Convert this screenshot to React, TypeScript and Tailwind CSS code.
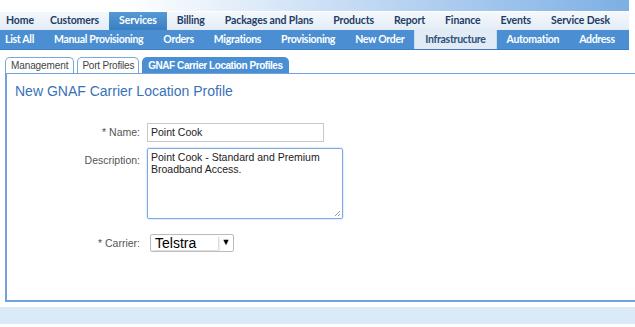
const top = ["Home", "Customers", "Services", "Billing", "Packages and Plans", "Products", "Report", "Finance", "Events", "Service Desk"];
const sub = ["List All", "Manual Provisioning", "Orders", "Migrations", "Provisioning", "New Order", "Infrastructure", "Automation", "Address"];

export default function App() {
  return (
    <div className="w-[635px] h-[327px] bg-white overflow-hidden font-['Liberation_Sans',Arial,sans-serif]">
      {/* banner strip */}
      <div className="w-[629px] h-[11px] bg-gradient-to-r from-white from-20% to-[#7dafe4]" />

      {/* main menu */}
      <div className="w-[629px] h-[19px] flex items-stretch border-t border-white bg-gradient-to-b from-[#f4f8fc] to-[#e3ecf6] font-['Lato',sans-serif] font-bold text-[10.5px] tracking-[-0.12px] text-[#1d3d66] whitespace-nowrap overflow-hidden">
        {top.map((t, i) => (
          <div
            key={t}
            className={
              "shrink-0 flex items-center " +
              (i === 0 ? "pl-[6px] pr-[6px] " : "px-[10px] ") +
              (t === "Services" ? "bg-gradient-to-b from-[#5599d6] to-[#3a7fc1] text-white" : "")
            }
          >
            {t}
          </div>
        ))}
      </div>

      {/* sub menu */}
      <div className="w-[629px] h-[20px] flex items-stretch bg-[#4b8fd2] border-b border-[#3d7fc0] font-['Lato',sans-serif] font-bold text-[10.5px] tracking-[-0.3px] text-white whitespace-nowrap overflow-hidden">
        {sub.map((t, i) => (
          <div
            key={t}
            className={
              "shrink-0 flex items-center " +
              (i === 0 ? "pl-[5px] pr-[10px] " : "px-[10px] ") +
              (t === "Infrastructure" ? "bg-[#e1ebf5] text-[#2b5079] border-x border-[#c9dbee]" : "")
            }
          >
            {t}
          </div>
        ))}
      </div>

      {/* tabs */}
      <div className="mt-[7px] pl-[5px] flex items-end gap-[3px] h-[16px] text-[10px] whitespace-nowrap">
        <div className="h-[16px] px-[5px] flex items-center border border-b-0 border-[#7aa8da] rounded-t-[5px] text-[#444] tracking-[-0.1px]">Management</div>
        <div className="h-[16px] px-[4px] flex items-center border border-b-0 border-[#7aa8da] rounded-t-[5px] text-[#444] tracking-[-0.2px]">Port Profiles</div>
        <div className="h-[16px] px-[6px] flex items-center rounded-t-[5px] bg-[#4a8fd3] text-white font-bold tracking-[-0.45px]">GNAF Carrier Location Profiles</div>
      </div>

      {/* panel */}
      <div className="ml-[5px] w-[630px] h-[229px] border-l-2 border-t border-b-2 border-[#6fa3dc] bg-white">
        <h1 className="pl-[8px] pt-[8px] text-[14px] text-[#3a72b8] leading-[18px]">New GNAF Carrier Location Profile</h1>

        <div className="mt-[23px] grid grid-cols-[133px_auto] gap-x-[7px] text-[10.5px] text-[#555]">
          <div className="text-right leading-[19px]">* Name:</div>
          <div className="w-[177px] h-[19px] border border-[#c8c8c8] bg-white px-[3px] leading-[17px] text-[#222]">Point Cook</div>

          <div className="text-right mt-[6px] pt-[5px]">Description:</div>
          <div className="relative mt-[6px] w-[196px] h-[71px] border border-[#7ea9e6] rounded-[2px] shadow-[0_0_2px_#9cc0ee] px-[3px] pt-[2px] leading-[12px] text-[#222]">
            Point Cook - Standard and Premium Broadband Access.
            <svg className="absolute right-[1px] bottom-[1px]" width="7" height="7" viewBox="0 0 7 7">
              <path d="M6 1L1 6M6 4L4 6" stroke="#999" strokeWidth="1" />
            </svg>
          </div>

          <div className="text-right mt-[15px] leading-[18px]">* Carrier:</div>
          <div className="mt-[15px] ml-[3px] w-[84px] h-[18px] flex border border-[#bbb] rounded-[2px] bg-white">
            <div className="flex-1 m-[1px] shadow-[1px_1px_2px_#ccc] pl-[3px] text-[14px] leading-[15px] text-black">Telstra</div>
            <div className="w-[14px] flex items-center justify-center text-[9px] text-black">▼</div>
          </div>
        </div>
      </div>

      {/* footer band */}
      <div className="mt-[5px] h-[17px] bg-[#dbeaf8]" />
    </div>
  );
}
